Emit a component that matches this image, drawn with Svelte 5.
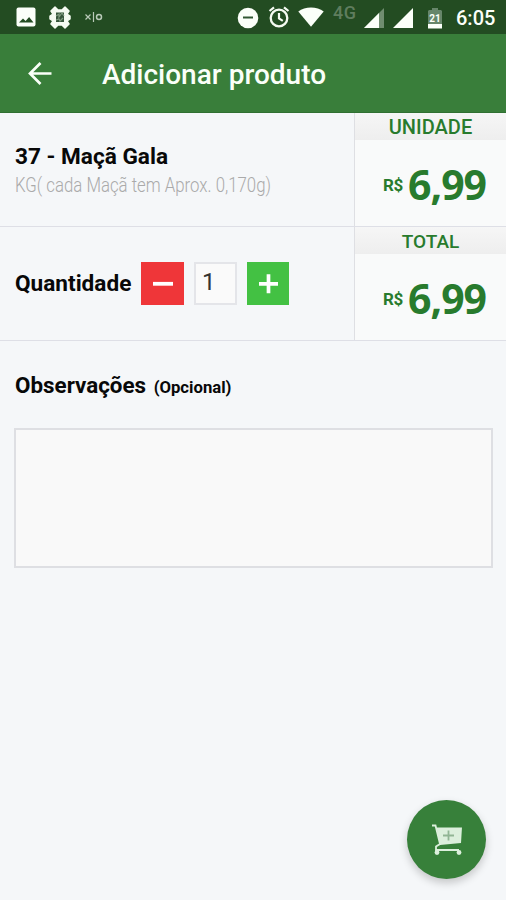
<script>
  const unitPrice = 6.99;
  let quantity = $state(1);
  let notes = $state('');
  const money = (value) => value.toFixed(2).replace('.', ',');
  const total = $derived(money(unitPrice * quantity));
</script>

{#snippet price(label, value)}
  <aside class="price">
    <div class="label" class:wide={label === 'UNIDADE'}>{label}</div>
    <div class="amount"><span class="currency">R$</span><span class="value">{value}</span></div>
  </aside>
{/snippet}

<main class="screen">
  <div class="status">
    <svg class="picture" width="20" height="20" viewBox="0 0 20 20">
      <rect x=".5" y=".5" width="19" height="19" rx="2" fill="#fbfff9" />
      <path d="M3 15.500l4-4 2.600 2.500 3.500-4 4.400 5.500z" fill="#234c22" />
    </svg>
    <svg class="gear" width="24" height="24" viewBox="0 0 24 24">
      <path d="M7 2l3 3h4l3-3 4 4-2 3 3 2v3l-3 2 2 3-4 4-3-3h-4l-3 3-4-4 2-3-3-2v-3l3-2-2-3z" fill="#f5fbf2" stroke="#f5fbf2" stroke-width="1.500" stroke-linejoin="round" />
      <path d="M8 7.500h8v9.500H8z" fill="#36563b" />
      <path d="M8 11l3-2v3l3-4 2 3M8 15l3-1 1 2 3-3" fill="none" stroke="#809b80" stroke-width="1.200" />
    </svg>
    <svg class="xio" width="20" height="12" viewBox="0 0 20 12">
      <path d="M1.500 3.500l5 5m0-5l-5 5M9.500 1v10" fill="none" stroke="#b9c9b8" stroke-width="1.200" />
      <circle cx="15" cy="6" r="2.500" fill="none" stroke="#b9c9b8" stroke-width="1.500" />
    </svg>
    <span class="grow"></span>
    <svg class="dnd" width="22" height="22" viewBox="0 0 22 22">
      <circle cx="11" cy="11" r="10.300" fill="#fbfff9" />
      <path d="M6 10.500h10" stroke="#315733" stroke-width="2" />
    </svg>
    <svg class="alarm" width="22" height="22" viewBox="0 0 22 22">
      <circle cx="11" cy="12" r="8.300" fill="none" stroke="#f5fbf2" stroke-width="2.300" />
      <path d="M1.500 5L6 1.300M20.500 5L16 1.300M11 7v5.500l3.800 2.400" fill="none" stroke="#f5fbf2" stroke-width="2.200" />
    </svg>
    <svg class="wifi" width="26" height="20" viewBox="0 0 26 20">
      <path d="M.3 4.500C7-.8 19-.8 25.700 4.500L13 19.800z" fill="#fbfff9" />
    </svg>
    <span class="network">4G</span>
    <svg class="signal" width="20" height="20" viewBox="0 0 20 20">
      <path d="M0 20L20 0v20z" fill="#708d70" />
      <path d="M0 20L15 5v15z" fill="#fbfff9" />
    </svg>
    <svg class="signal second" width="20" height="20" viewBox="0 0 20 20">
      <path d="M0 20L20 0v20z" fill="#fbfff9" />
    </svg>
    <svg class="battery" width="14" height="21" viewBox="0 0 14 21">
      <path d="M1 2h3V0h6v2h3l1 1v13H0V3z" fill="#67866a" />
      <path d="M0 16h14v4.500H0z" fill="#fbfff9" />
      <text x="7" y="13.500" text-anchor="middle" font-size="10" font-weight="700" fill="#fbfff9">21</text>
    </svg>
    <time>6:05</time>
  </div>

  <header>
    <button class="back" aria-label="Voltar">
      <svg width="24" height="24" viewBox="0 0 24 24">
        <path d="M12.500 2L2 12.500l10.500 10.500M2 12.500h21.500" fill="none" stroke="#fafff8" stroke-width="2.700" />
      </svg>
    </button>
    <h1>Adicionar produto</h1>
  </header>

  <section class="row">
    <div class="product">
      <h2>37 - Maçã Gala</h2>
      <p>KG( cada Maçã tem Aprox. 0,170g)</p>
    </div>
    {@render price('UNIDADE', money(unitPrice))}
  </section>

  <section class="row">
    <div class="quantity">
      <h2>Quantidade</h2>
      <button class="minus" aria-label="Diminuir" onclick={() => (quantity = Math.max(1, quantity - 1))}>
        <svg width="43" height="43" viewBox="0 0 43 43"><path d="M12 21.800h20" stroke="#fff" stroke-width="3.800" /></svg>
      </button>
      <span class="count">{quantity}</span>
      <button class="plus" aria-label="Aumentar" onclick={() => (quantity += 1)}>
        <svg width="43" height="43" viewBox="0 0 43 43"><path d="M12 21.800h19M21.500 12.300v19" stroke="#fff" stroke-width="3.700" /></svg>
      </button>
    </div>
    {@render price('TOTAL', total)}
  </section>

  <section class="notes">
    <label for="notes">Observações <small>(Opcional)</small></label>
    <textarea id="notes" bind:value={notes}></textarea>
  </section>

  <button class="cart" aria-label="Adicionar ao carrinho">
    <svg width="32" height="32" viewBox="0 0 32 32">
      <path d="M5.500 3.500H31l-1 15.500L9 21z" fill="#dcefdc" />
      <path d="M1 1.500h3.500L9 20l-4 2.500v3.500h23" fill="none" stroke="#dcefdc" stroke-width="1.800" />
      <path d="M12 11.500h11M17.500 6.500v10" stroke="#91b594" stroke-width="1.800" />
      <circle cx="6" cy="28.500" r="2.400" fill="#dcefdc" />
      <circle cx="28" cy="28.500" r="2.400" fill="#dcefdc" />
    </svg>
  </button>
</main>

<style>
  :global(body) { margin: 0; }
  .screen {
    position: relative;
    box-sizing: border-box;
    width: 506px;
    height: 900px;
    overflow: hidden;
    background: #f5f7f9;
    font-family: Roboto, sans-serif;
    color: #080808;
  }
  button { border: 0; padding: 0; display: grid; place-items: center; }
  svg { display: block; flex: none; }
  h1, h2, p { margin: 0; white-space: nowrap; }

  .status {
    display: flex;
    height: 34px;
    box-sizing: border-box;
    align-items: flex-start;
    padding: 7px 11px 0 16px;
    background: #234c22;
    color: #fbfff9;
  }
  .gear { margin: -2px 0 0 12px; }
  .xio { margin: 4px 0 0 12px; }
  .grow { flex: 1; }
  .dnd { margin-right: 9px; }
  .alarm { margin-right: 8px; margin-top: -1px; }
  .wifi { margin-right: 9px; }
  .network { width: 24px; margin: -4px 7px 0 0; font-size: 18px; line-height: 20px; letter-spacing: 0.5px; font-weight: 500; color: #5f7d5e; }
  .signal { margin: 1px 9px 0 0; }
  .signal.second { margin-right: 15px; }
  .battery { margin: 1px 14px 0 0; }
  time { width: 39px; font-size: 20px; line-height: 23px; font-weight: 500; white-space: nowrap; }

  header {
    display: flex;
    align-items: center;
    height: 79px;
    box-sizing: border-box;
    padding: 0 28px 1px;
    background: #397e3a;
    border-bottom: 1px solid #307032;
    color: #fafff8;
  }
  .back { background: none; }
  h1 { margin: 5px 0 0 50px; font-size: 28px; line-height: 34px; font-weight: 500; }

  .row { display: flex; height: 114px; box-sizing: border-box; border-bottom: 1px solid #dedfe6; }
  .product { flex: 1; padding: 30px 0 0 15px; }
  h2 { font-size: 22.6px; line-height: 28px; font-weight: 700; }
  .product p {
    width: max-content;
    font-size: 20px;
    line-height: 28px;
    font-weight: 300;
    color: #aaa;
    transform: scaleX(0.84);
    transform-origin: left;
  }
  .price { width: 152px; box-sizing: border-box; border-left: 1px solid #dedfe3; background: #f9fafa; color: #287b2d; }
  .label {
    height: 27px;
    line-height: 29px;
    text-align: center;
    font-size: 19px;
    font-weight: 500;
    background: linear-gradient(#f6f6f6, #eeeeee);
  }
  .label.wide { font-size: 20px; }
  .amount { display: flex; align-items: baseline; padding: 16px 0 0 28px; white-space: nowrap; }
  .currency { width: 25px; font-size: 17px; font-weight: 700; letter-spacing: -0.3px; transform: translateY(-9px); }
  .value { font-family: "Open Sans", sans-serif; font-size: 41px; line-height: 56px; font-weight: 700; letter-spacing: -1px; }

  .quantity { flex: 1; display: flex; align-items: center; padding: 0 0 1px 15px; }
  .quantity h2 { width: 126px; margin-top: 2px; }
  .quantity button { width: 43px; height: 43px; }
  .quantity .plus { width: 42px; }
  .minus { background: #ef3639; }
  .plus { background: #43c143; }
  .count {
    box-sizing: border-box;
    width: 43px;
    height: 43px;
    margin: 0 10px;
    padding-left: 6px;
    border: 2px solid #e4e5e9;
    background: #fafafa;
    font-size: 24px;
    line-height: 36px;
    color: #333;
  }

  .notes { padding: 30px 13px 0 14px; }
  label { display: block; padding-left: 1px; font-size: 22.4px; line-height: 29px; height: 29px; font-weight: 700; white-space: nowrap; }
  small { margin-left: 2px; font-size: 16.7px; }
  textarea {
    display: block;
    box-sizing: border-box;
    width: 100%;
    height: 140px;
    margin: 28px 0 0;
    padding: 8px;
    resize: none;
    border: 2px solid #dedfe3;
    background: #f9f9f9;
    font: inherit;
  }
  .notes textarea { margin-top: 28px; }
  .cart {
    position: absolute;
    left: 407px;
    top: 800px;
    width: 79px;
    height: 79px;
    border-radius: 50%;
    background: #37803a;
    box-shadow: 0 4px 8px #0003;
  }
</style>
